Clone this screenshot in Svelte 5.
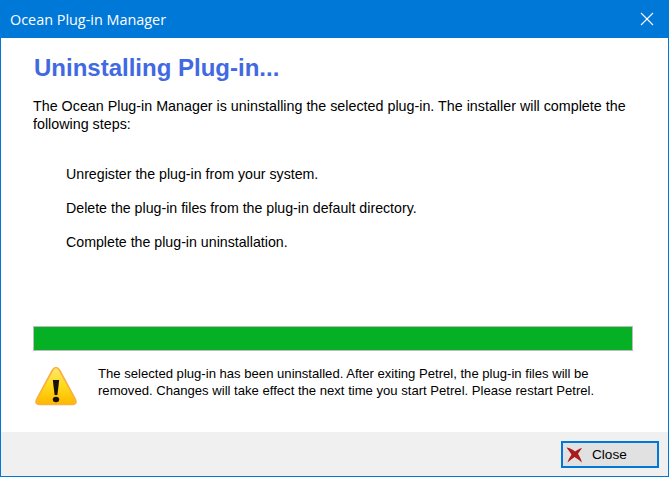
<script>
	const steps = [
		'Unregister the plug-in from your system.',
		'Delete the plug-in files from the plug-in default directory.',
		'Complete the plug-in uninstallation.'
	];
</script>

<div class="window">
	<header class="titlebar">
		<span class="title">Ocean Plug-in Manager</span>
		<svg class="x" width="14" height="14" viewBox="0 0 14 14">
			<path d="M1 1 L13 13 M13 1 L1 13" stroke="#fff" stroke-width="1.1" fill="none" />
		</svg>
	</header>

	<main class="content">
		<h1>Uninstalling Plug-in...</h1>
		<p class="intro">
			The Ocean Plug-in Manager is uninstalling the selected plug-in. The installer will complete the following steps:
		</p>
		<ul>
			{#each steps as step}
				<li>{step}</li>
			{/each}
		</ul>
		<div class="progress"></div>
		<div class="notice">
			<svg class="warn" width="44" height="40" viewBox="0 0 44 40">
				<defs>
					<linearGradient id="warnFill" x1="0" y1="0" x2="0" y2="1">
						<stop offset="0" stop-color="#ffe770" />
						<stop offset="0.5" stop-color="#ffd91a" />
						<stop offset="1" stop-color="#fdb800" />
					</linearGradient>
				</defs>
				<path
					d="M22 1.5 C23.5 1.5 24.5 2.5 25.5 4 L41.5 33.5 C42.8 36.5 41.5 38.5 38.5 38.5 L5.5 38.5 C2.5 38.5 1.2 36.5 2.5 33.5 L18.5 4 C19.5 2.5 20.5 1.5 22 1.5 Z"
					fill="url(#warnFill)"
					stroke="#f8b040"
					stroke-width="1.6"
				/>
				<path d="M18.8 14 L25.2 14 L23.4 29 L20.6 29 Z" fill="#1a1208" />
				<ellipse cx="22" cy="33.5" rx="3.2" ry="2.8" fill="#1a1208" />
			</svg>
			<p>
				The selected plug-in has been uninstalled. After exiting Petrel, the plug-in files will be removed. Changes will take effect the next time you start Petrel. Please restart Petrel.
			</p>
		</div>
	</main>

	<footer class="footer">
		<button type="button">
			<svg class="close-icon" width="17" height="16" viewBox="0 0 17 16">
				<path d="M0.5 0.5 C4 1 6.5 2.5 9 4.5 C11 3 13.5 1.5 16 1 C14.5 3 13.2 4.8 12 6.8 C13.5 9.5 15 12 16 15.5 C13.5 13.5 11 11.5 8.5 10 C6.5 11.5 4 13.5 1.5 15.5 C2.5 12.5 4 10 5.5 7.5 C4 5 2.2 2.8 0.5 0.5 Z" fill="#ab1a1c" />
			</svg>
			<span>Close</span>
		</button>
	</footer>
</div>

<style>
	:global(body) {
		margin: 0;
		background: #fff;
	}

	.window {
		box-sizing: border-box;
		width: 669px;
		height: 477px;
		display: flex;
		flex-direction: column;
		border: 1px solid #0078d7;
		border-top: 0;
		font-family: 'Liberation Sans', Arial, sans-serif;
		font-size: 14.3px;
		color: #000;
	}

	.titlebar {
		box-sizing: border-box;
		height: 38px;
		flex: none;
		margin: 0 -1px;
		padding: 0 15px 0 10px;
		background: #0078d7;
		color: #fff;
		display: flex;
		align-items: center;
		justify-content: space-between;
	}

	.title {
		font-family: 'Open Sans', sans-serif;
		font-size: 14.4px;
	}

	.content {
		flex: 1;
		padding: 0 35px 0 32px;
		display: flex;
		flex-direction: column;
		min-height: 0;
	}

	h1 {
		margin: 15px 0 0;
		font-size: 24px;
		line-height: 30px;
		font-weight: bold;
		color: #4169e1;
		padding-left: 1px;
	}

	.intro {
		margin: 14px 0 0;
		line-height: 18px;
	}

	ul {
		list-style: none;
		margin: 33px 0 0;
		padding: 0 0 0 33px;
		display: flex;
		flex-direction: column;
		gap: 18px;
		line-height: 16px;
		font-size: 14.2px;
	}

	.progress {
		height: 25px;
		margin-top: 76px;
		box-sizing: border-box;
		background: #06b025;
		border: 1px solid #bcbcbc;
	}

	.notice {
		margin-top: 13px;
		display: flex;
		align-items: flex-start;
		gap: 20px;
		padding-left: 1px;
	}

	.warn {
		flex: none;
		margin-top: 2px;
	}

	.notice p {
		margin: 0;
		font-size: 13.1px;
		line-height: 17px;
		width: 515px;
		margin-top: 1px;
	}

	.footer {
		box-sizing: border-box;
		height: 44px;
		flex: none;
		background: #f0f0f0;
		display: flex;
		align-items: flex-start;
		justify-content: flex-end;
		padding: 9px 9px 0 0;
	}

	button {
		box-sizing: border-box;
		width: 98px;
		height: 27px;
		padding: 0 0 0 3px;
		background: #e1e1e1;
		border: 2px solid #0078d7;
		display: flex;
		align-items: center;
		font: inherit;
		color: #000;
	}

	.close-icon {
		flex: none;
	}

	button span {
		margin-left: 9px;
		font-size: 13.6px;
	}
</style>
